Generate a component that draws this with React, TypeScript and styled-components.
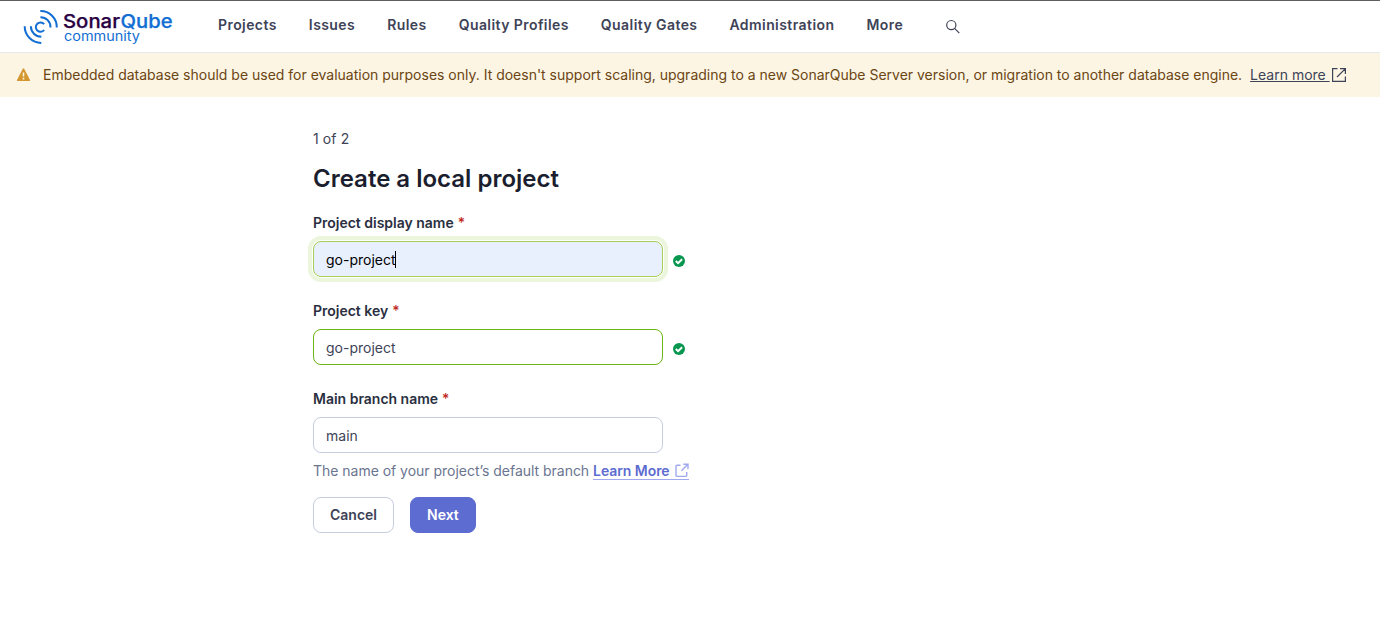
import React from 'react';
import styled, { createGlobalStyle, css } from 'styled-components';

const GlobalStyle = createGlobalStyle`
  *, *::before, *::after { box-sizing: border-box; }
  body {
    margin: 0;
    background: #fff;
    color: #3e4357;
    font-family: Inter, "Liberation Sans", sans-serif;
    font-size: 14px;
    line-height: 20px;
  }
`;

const Header = styled.header`
  display: flex;
  align-items: center;
  height: 53px;
  padding-left: 20px;
  border-top: 1px solid #5f5d60;
  border-bottom: 1px solid #e6e8f0;
`;

const LogoLink = styled.a`
  display: flex;
  width: 160px;
  height: 41px;
`;

const Nav = styled.nav`
  display: flex;
  gap: 32px;
  margin: 0 0 3px 38px;
`;

const NavItem = styled.a`
  color: #3e4357;
  font-weight: 600;
  letter-spacing: 0.425px;
`;

const SearchButton = styled.button`
  display: flex;
  margin: 0 0 0 42px;
  padding: 0;
  border: 0;
  background: none;
`;

const Banner = styled.div`
  display: flex;
  align-items: center;
  height: 44px;
  padding-left: 16px;
  background: #fcf5e4;
  color: #6b4513;
  white-space: nowrap;
`;

const BannerText = styled.span`
  margin-left: 12px;
  letter-spacing: -0.006px;
`;

const BannerLink = styled.a`
  display: flex;
  align-items: center;
  margin-left: 8px;
  color: #3e4357;
  text-decoration: underline;
  white-space: pre;
`;

const Main = styled.main`
  width: 400px;
  margin: 32px 0 0 313px;
`;

const Step = styled.div`
  height: 20px;
  letter-spacing: 0.1px;
`;

const Title = styled.h1`
  margin: 14px 0 18px;
  color: #1b1e2e;
  font-size: 24px;
  font-weight: 600;
  line-height: 32px;
`;

const Field = styled.div`
  margin-bottom: 24px;
`;

const Label = styled.label`
  display: block;
  height: 20px;
  color: #2a2f40;
  font-weight: 600;
  letter-spacing: -0.01px;
`;

const Required = styled.span`
  margin-left: 4px;
  color: #c0281c;
  font-weight: 500;
`;

const Row = styled.div`
  display: flex;
  align-items: center;
  gap: 10px;
  margin-top: 8px;
`;

type InputState = 'focused' | 'valid' | 'plain';

const states = {
  focused: css`
    border-color: #a6cf55;
    background: #e8f0fe;
    color: #000;
    box-shadow: 0 0 0 1px #fff, 0 0 0 5px #ecf6dc;
  `,
  valid: css`
    border-color: #6cb518;
  `,
  plain: css`
    border-color: #c5cddf;
  `,
};

const InputBox = styled.div<{ $state: InputState }>`
  display: flex;
  align-items: center;
  width: 350px;
  height: 36px;
  padding: 1px 12px 0;
  border: 1px solid;
  border-radius: 8px;
  background: #fff;
  color: #3e4357;
  ${({ $state }) => states[$state]}
`;

const Caret = styled.span`
  width: 1px;
  height: 17px;
  margin-left: -1px;
  background: #000;
`;

const CheckMark = styled.svg`
  width: 12px;
  height: 12px;
  margin-top: 4px;
`;

const Hint = styled.div`
  display: flex;
  height: 20px;
  margin: 8px 0 -8px;
  color: #6a7590;
  letter-spacing: -0.025px;
  white-space: pre;
`;

const HintLink = styled.a`
  display: flex;
  gap: 5px;
  height: 19px;
  border-bottom: 1px solid #a0a8f0;
  color: #5d6cd0;
  font-weight: 600;
  letter-spacing: -0.06px;
`;

const LinkIcon = styled.svg`
  width: 14px;
  height: 15px;
  margin-top: 2px;
`;

const Actions = styled.div`
  display: flex;
  gap: 16px;
`;

const Button = styled.button<{ $primary?: boolean }>`
  height: 36px;
  padding: 0 16px;
  border: 1px solid ${({ $primary }) => ($primary ? '#5d6cd0' : '#c5cddf')};
  border-radius: 8px;
  background: ${({ $primary }) => ($primary ? '#5d6cd0' : '#fff')};
  color: ${({ $primary }) => ($primary ? '#fff' : '#3e4357')};
  font: 600 14px/20px Inter, "Liberation Sans", sans-serif;
`;

const Logo = () => (
  <svg width="160" height="41" viewBox="20 6 160 41" aria-label="SonarQube community">
    <g fill="none" stroke="#126ed3" strokeWidth="2">
      <path d="M44.2 24.2A4.7 4.7 0 1 0 44.2 30" />
      <path d="M40.4 17.2A9.9 9.9 0 0 1 50.5 27.5M40.3 11A16.2 16.2 0 0 1 56.8 27.5" />
      <path d="M30.9 26.3A10.3 10.3 0 0 0 41.3 36.7M24.7 26.3A16.5 16.5 0 0 0 41.3 42.9" />
    </g>
    <g fontFamily="Inter, sans-serif" lengthAdjust="spacingAndGlyphs">
      <text x="63" y="27.5" fontSize="18.5" fontWeight="500" fill="#290042" stroke="#290042" strokeWidth="0.25" textLength="57" lengthAdjust="spacingAndGlyphs">Sonar</text>
      <text x="120.5" y="27.5" fontSize="18.5" fontWeight="500" fill="#126ed3" stroke="#126ed3" strokeWidth="0.25" textLength="52" lengthAdjust="spacingAndGlyphs">Qube</text>
      <text x="64" y="41" fontSize="13" fill="#126ed3" textLength="76" lengthAdjust="spacingAndGlyphs">community</text>
    </g>
  </svg>
);

const SearchIcon = () => (
  <svg width="16" height="16" viewBox="0 0 16 16" fill="none" stroke="#3e4357" strokeWidth="1.2">
    <circle cx="6.3" cy="6.1" r="4.6" />
    <path d="M9.6 9.4L14.3 14.1" />
  </svg>
);

const WarningIcon = () => (
  <svg width="15" height="16" viewBox="0 0 15 16">
    <path d="M7.5 2.2L13.3 13.3H1.7Z" fill="#d4972f" stroke="#d4972f" strokeWidth="1.6" strokeLinejoin="round" />
    <path d="M7.5 5.6v4M7.5 10.7v1.8" stroke="#fcf5e4" strokeWidth="1.6" />
  </svg>
);

const BannerExternalIcon = () => (
  <svg width="17" height="16" viewBox="-1 0 17 16" fill="none" stroke="#3e4357" strokeWidth="1.2">
    <path d="M6.5 1.6H1.6V14.4H14.4V9.5M9 1.6H14.4V7M14.2 1.8L6 10" />
  </svg>
);

const LinkExternalIcon = () => (
  <LinkIcon viewBox="0 0 14 15" fill="none" stroke="#a0a8f0" strokeWidth="1.4">
    <path d="M5.5 2.2H2.2Q1 2.2 1 3.4V12.2Q1 13.4 2.2 13.4H10.5Q11.7 13.4 11.7 12.2V9M8.3 1.2H13V6M12.6 1.6L6.5 7.7" />
  </LinkIcon>
);

const CheckIcon = () => (
  <CheckMark viewBox="0 0 12 12">
    <circle cx="6" cy="6" r="6" fill="#07964f" />
    <path d="M2.8 6.1L5.1 8.2L9.1 4.3" fill="none" stroke="#fff" strokeWidth="2" />
  </CheckMark>
);

const navItems = ['Projects', 'Issues', 'Rules', 'Quality Profiles', 'Quality Gates', 'Administration', 'More'];

type TextFieldProps = { label: string; value: string; state: InputState; children?: React.ReactNode };

const TextField = ({ label, value, state, children }: TextFieldProps) => (
  <Field>
    <Label>{label}<Required>*</Required></Label>
    <Row>
      <InputBox $state={state}>{value}{state === 'focused' && <Caret />}</InputBox>
      {state !== 'plain' && <CheckIcon />}
    </Row>
    {children}
  </Field>
);

export default function App() {
  return (
    <>
      <GlobalStyle />
      <Header>
        <LogoLink><Logo /></LogoLink>
        <Nav>{navItems.map((item) => <NavItem key={item}>{item}</NavItem>)}</Nav>
        <SearchButton aria-label="Search"><SearchIcon /></SearchButton>
      </Header>
      <Banner>
        <WarningIcon />
        <BannerText>
          Embedded database should be used for evaluation purposes only. It doesn't support scaling, upgrading to a new SonarQube Server version, or migration to another database engine.
        </BannerText>
        <BannerLink>{'Learn more '}<BannerExternalIcon /></BannerLink>
      </Banner>
      <Main>
        <Step>1 of 2</Step>
        <Title>Create a local project</Title>
        <TextField label="Project display name" value="go-project" state="focused" />
        <TextField label="Project key" value="go-project" state="valid" />
        <TextField label="Main branch name" value="main" state="plain">
          <Hint>{'The name of your project’s default branch '}<HintLink>Learn More<LinkExternalIcon /></HintLink></Hint>
        </TextField>
        <Actions>
          <Button>Cancel</Button>
          <Button $primary>Next</Button>
        </Actions>
      </Main>
    </>
  );
}
